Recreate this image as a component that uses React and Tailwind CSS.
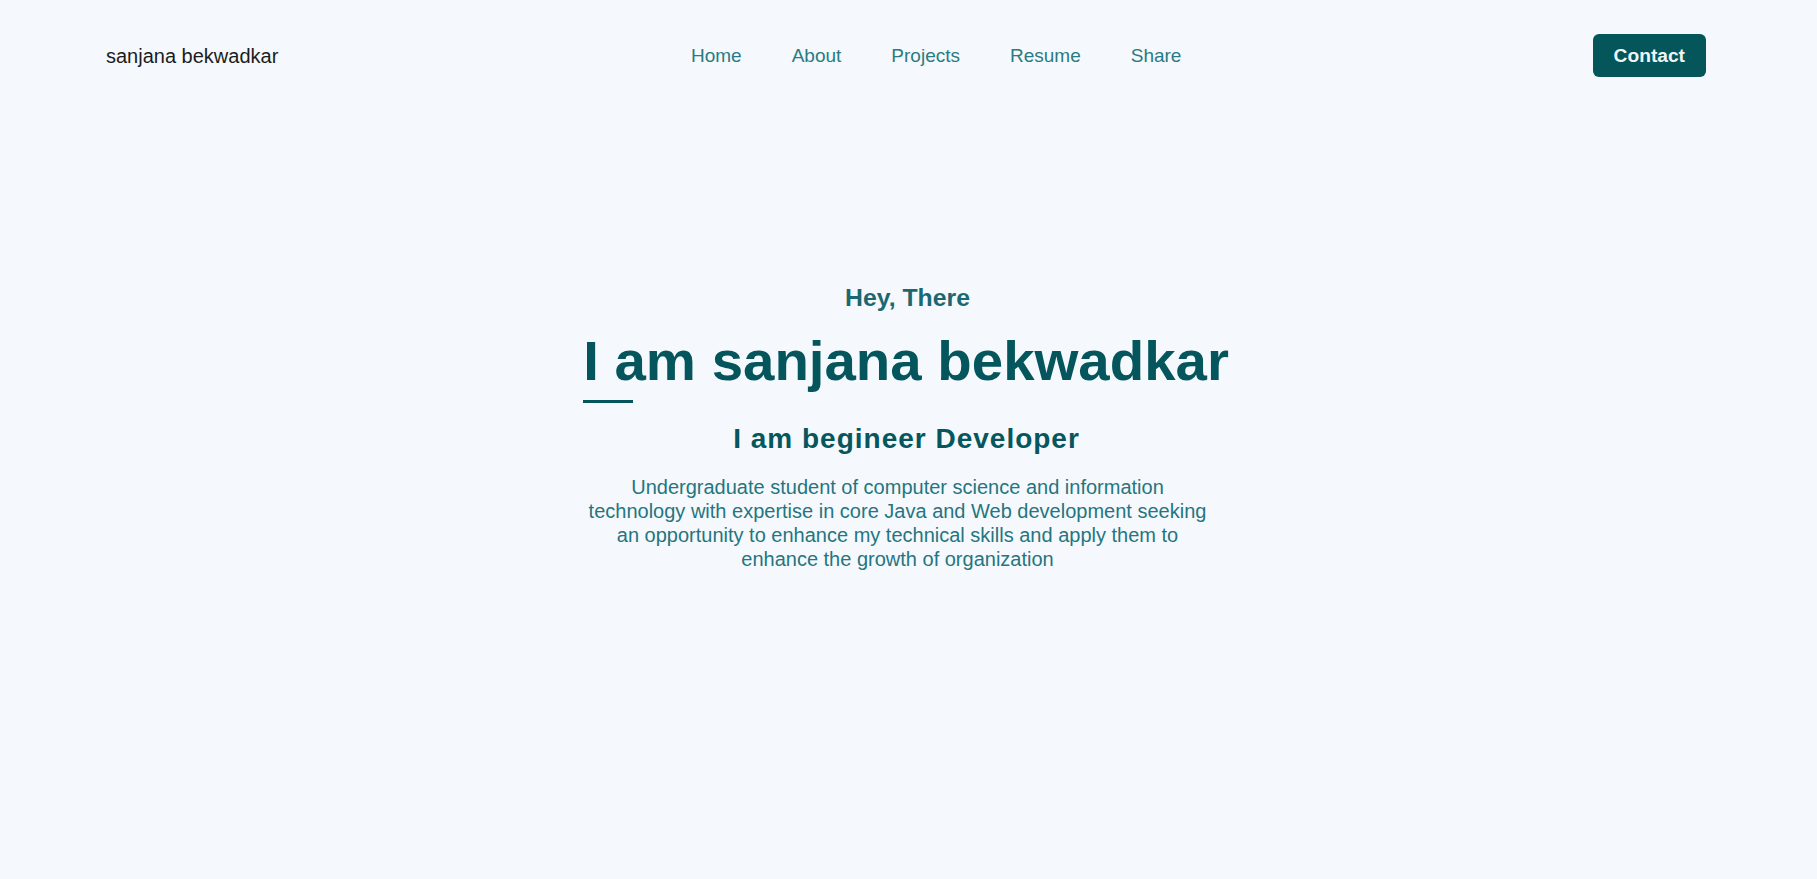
import React from "react";

const navLinks = ["Home", "About", "Projects", "Resume", "Share"];

export default function App() {
  return (
    <div className="min-h-screen bg-[#f5f9fe] font-['Liberation_Sans',Arial,sans-serif]">
      {/* Header */}
      <header className="flex h-[111px] items-center pl-[106px] pr-[111px]">
        <div className="w-[585px] shrink-0 text-[20px] text-[#1c1c1c]">sanjana bekwadkar</div>
        <nav className="flex gap-[50px] pt-[1px]">
          {navLinks.map((link) => (
            <a key={link} href="#" className="text-[19px] text-[#2a7b83] hover:text-[#04565c]">
              {link}
            </a>
          ))}
        </nav>
        <button className="ml-auto rounded-md bg-[#04565b] px-[21px] py-[10px] text-[19.2px] font-bold leading-[23px] text-[#f0f5f8]">
          Contact
        </button>
      </header>

      {/* Hero */}
      <main className="flex flex-col items-center pt-[173px] text-center">
        <h3 className="pr-[2px] text-[24.8px] font-bold leading-[28px] text-[#1b6870]">Hey, There</h3>
        <div className="mt-[17px] inline-block pr-[5px] text-left">
          <h1 className="text-[56.4px] font-bold leading-[64px] text-[#04565c]">I am sanjana bekwadkar</h1>
          <div className="mt-[7px] h-[3px] w-[50px] bg-[#04565c]"></div>
        </div>
        <h2 className="mt-[20px] pr-[4px] text-[28px] font-bold leading-[32px] tracking-[1px] text-[#05575d]">
          I am begineer Developer
        </h2>
        <div className="mt-[20px] pr-[22px]">
          <p className="w-[624px] text-[20px] leading-[24px] text-[#25757e]">
            Undergraduate student of computer science and information technology with expertise in core Java and Web
            development seeking an opportunity to enhance my technical skills and apply them to enhance the growth of
            organization
          </p>
        </div>
      </main>
    </div>
  );
}
